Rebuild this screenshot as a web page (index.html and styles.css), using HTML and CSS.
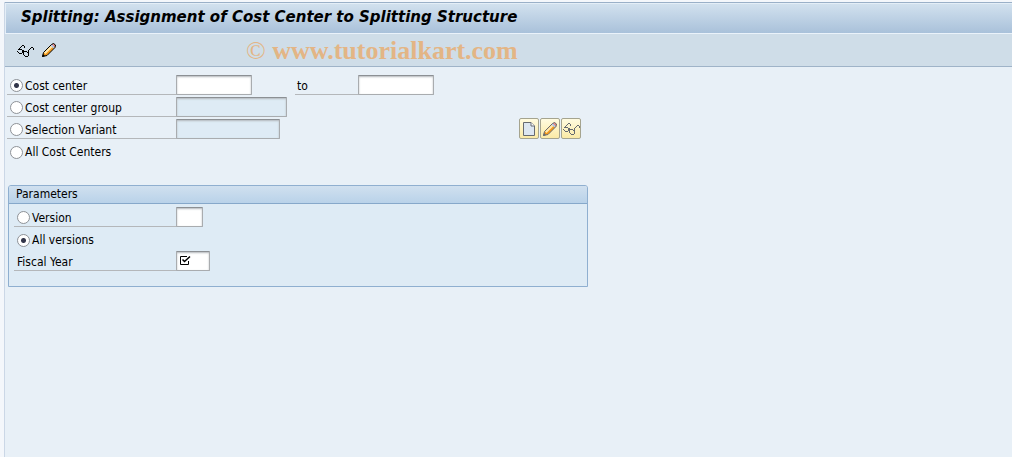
FILE: index.html
```html
<!DOCTYPE html>
<html lang="en">
<head>
    <meta charset="UTF-8">
    <meta name="viewport" content="width=device-width, initial-scale=1.0">
    <title>Splitting: Assignment of Cost Center to Splitting Structure</title>
    <link rel="stylesheet" href="styles.css">
</head>
<body>
    <!-- Shared icons -->
    <svg class="icon-defs" aria-hidden="true">
        <symbol id="glasses" viewBox="0 0 17 13">
            <g fill="none" stroke="currentColor" stroke-width="1" shape-rendering="crispEdges">
                <path d="M.5 6.500 L5.500 1.500 H6.500 L7.500 2.500 V3.500"/>
                <path d="M1.500 5.500 H4.500 L5.500 6.500 V8.500 L4.500 9.500 H2.500 L.5 7.500 V6.500"/>
                <path d="M5.500 7.500 L7.500 6.500"/>
                <path d="M7.500 7.500 H9.500 L11.500 9.500 V11.500 L10.500 12.500 H8.500 L6.500 10.500 V8.500 Z"/>
                <path d="M11.500 8.500 V6.500 L14.500 3.500 H15.500 L16.500 4.500 V5.500"/>
            </g>
        </symbol>
        <symbol id="pencil" viewBox="0 0 14 14">
            <path d="M.5 13.500 L1.500 9.500 L9.500 1.500 L11.500 .5 L13.500 2 L13 4.500 L5 12.500 Z" fill="#f59a1b"/>
            <path d="M2 9.500 L9.500 2 L11 3.500 L3.500 11 Z" fill="#ffe9b0"/>
            <path d="M8.500 2.500 L10 1 L13 4 L11.500 5.500 Z" fill="#b4c6ea"/>
            <path d="M10 1.500 L11.500 .5 L13.500 2.500 L12.500 4 Z" fill="#e78a8a"/>
            <path d="M.5 13.500 L1.500 9.500 L9.500 1.500 L11.500 .5 L13.500 2 L13 4.500 L5 12.500 Z" fill="none" stroke="currentColor"/>
            <path d="M0 14 L1 11 L3 13 Z" fill="currentColor"/>
        </symbol>
        <symbol id="page" viewBox="0 0 14 16">
            <path d="M1.500 1.500 H9 L12.500 5 V14.500 H1.500 Z" fill="#dce6f1" stroke="currentColor"/>
            <path d="M9 1.500 V5 H12.500" fill="#fff" stroke="currentColor"/>
        </symbol>
    </svg>

    <div class="window">
        <header class="titlebar">
            <h1>Splitting: Assignment of Cost Center to Splitting Structure</h1>
        </header>
        <div class="toolbar">
            <button class="tool" aria-label="Display"><svg width="17" height="13"><use href="#glasses"/></svg></button>
            <button class="tool" aria-label="Change"><svg width="14" height="14"><use href="#pencil"/></svg></button>
            <span class="watermark"><span class="copy">©</span> www.tutorialkart.com</span>
        </div>

        <form class="content">
            <div class="row">
                <label class="name line"><input type="radio" name="selection" checked>Cost center</label>
                <input class="field medium" type="text" aria-label="Cost center from">
                <label class="to line" for="costTo">to</label>
                <input class="field medium" type="text" id="costTo">
            </div>
            <div class="row">
                <label class="name line"><input type="radio" name="selection">Cost center group</label>
                <input class="field group locked" type="text" aria-label="Cost center group" readonly>
            </div>
            <div class="row">
                <label class="name line"><input type="radio" name="selection">Selection Variant</label>
                <div class="variant">
                    <input class="field wide locked" type="text" aria-label="Selection Variant" readonly>
                    <div class="actions">
                        <button type="button" aria-label="Create variant"><svg width="14" height="16"><use href="#page"/></svg></button>
                        <button type="button" aria-label="Change variant"><svg width="14" height="14"><use href="#pencil"/></svg></button>
                        <button type="button" aria-label="Display variant"><svg width="17" height="13"><use href="#glasses"/></svg></button>
                    </div>
                </div>
            </div>
            <div class="row">
                <label class="name"><input type="radio" name="selection">All Cost Centers</label>
            </div>

            <section class="panel">
                <h2>Parameters</h2>
                <div class="panel-body">
                    <div class="row">
                        <label class="name line"><input type="radio" name="version">Version</label>
                        <input class="field tiny" type="text" aria-label="Version">
                    </div>
                    <div class="row">
                        <label class="name"><input type="radio" name="version" checked>All versions</label>
                    </div>
                    <div class="row">
                        <label class="name line" for="fiscalYear">Fiscal Year</label>
                        <div class="required">
                            <input class="field small" type="text" id="fiscalYear" required>
                            <svg width="12" height="11" viewBox="0 0 12 11" fill="none" stroke="#000">
                                <path d="M8 1.500 H1.500 V9.500 H9.500 V6"/>
                                <path d="M3.500 4.500 L5.500 6.500 L11 1.500" stroke-width="1.500"/>
                            </svg>
                        </div>
                    </div>
                </div>
            </section>
        </form>
    </div>
</body>
</html>
```
FILE: styles.css
```css
* {
    box-sizing: border-box;
}
body {
    margin: 0;
    padding: 2px 0 0 4px;
    background: #f4f7fb;
    color: #000;
    font-family: "DejaVu Sans Condensed", Tahoma, sans-serif;
    font-size: 12px;
}
.icon-defs {
    display: none;
}
.window {
    min-height: calc(100vh - 2px);
    border-left: 1px solid #cbd7e6;
    background: #e8f0f7;
}
.titlebar {
    height: 31px;
    padding-left: 16px;
    border-top: 1px solid #9ab0c8;
    box-shadow: inset 1px 1px #e4eef7;
    background: linear-gradient(#d3e2ef, #a9c1da);
}
h1 {
    margin: 0;
    font-family: "DejaVu Sans", Verdana, sans-serif;
    font-size: 15px;
    line-height: 28px;
    font-style: italic;
    font-weight: bold;
    white-space: nowrap;
}
.toolbar {
    display: flex;
    align-items: center;
    height: 34px;
    padding-left: 12px;
    gap: 8px;
    border-top: 1px solid #eaf2fa;
    border-bottom: 1px solid #9fb3c8;
    background: #cfdde8;
}
.tool {
    display: flex;
    padding: 0;
    border: 0;
    background: none;
    color: #000;
}
.watermark {
    margin-left: 182px;
    padding-top: 2px;
    color: #e3b585;
    font-family: "Liberation Serif", serif;
    font-size: 26px;
    line-height: 30px;
    font-weight: bold;
    white-space: nowrap;
}
.copy {
    font-weight: normal;
}
.content {
    padding: 8px 0 0 2px;
}
.row {
    display: flex;
    height: 20px;
    margin-bottom: 2px;
}
.name {
    display: flex;
    align-items: center;
    width: 169px;
    padding: 2px 0 0 3px;
}
.line {
    border-bottom: 1px solid #b4b7ba;
}
input[type="radio"] {
    appearance: none;
    width: 13px;
    height: 13px;
    margin: 0 2px 0 0;
    border: 1px solid #8e9297;
    border-radius: 50%;
    background: #fff;
}
input[type="radio"]:checked {
    background: radial-gradient(circle, #33364a 2px, #fff 3px);
}
.field {
    height: 20px;
    padding: 0 3px;
    border: 1px solid #a9acaf;
    border-top-color: #8c9094;
    border-radius: 1px;
    background: #fff;
    box-shadow: inset 0 1px 2px #b4b8bc;
    font: inherit;
}
.locked {
    background: #deebf5;
}
.medium {
    width: 76px;
}
.group {
    width: 111px;
}
.wide {
    width: 104px;
}
.tiny {
    width: 27px;
}
.small {
    width: 34px;
}
.to {
    width: 63px;
    margin-left: 43px;
    padding: 1px 0 0 2px;
    line-height: 20px;
}
.variant {
    display: flex;
    justify-content: space-between;
    width: 405px;
}
.actions {
    display: flex;
    gap: 1px;
}
.actions button {
    display: flex;
    align-items: center;
    justify-content: center;
    width: 20px;
    height: 21px;
    margin-top: -1px;
    padding: 0;
    border: 1px solid #a5a48f;
    border-radius: 2px;
    background: linear-gradient(#fffbe0, #fbeaa6);
    color: #666a70;
}
.actions svg {
    flex: none;
}
.panel {
    max-width: 580px;
    margin: 24px 1px 0;
    border: 1px solid #8fafd0;
    border-radius: 3px 3px 0 0;
    background: #deebf5;
}
h2 {
    margin: 0;
    padding-left: 7px;
    border-bottom: 1px solid #86a8ca;
    border-radius: 2px 2px 0 0;
    background: linear-gradient(#d0e0ef, #b9d2e9);
    font-size: 12px;
    line-height: 17px;
    font-weight: normal;
}
.panel-body {
    padding: 3px 5px 13px;
}
.panel .name {
    width: 162px;
}
.required {
    position: relative;
}
.required svg {
    position: absolute;
    top: 4px;
    left: 3px;
}
```
